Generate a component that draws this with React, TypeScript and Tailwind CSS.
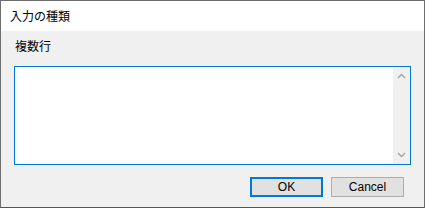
export default function App() {
  const font = { fontFamily: '"Noto Sans CJK JP", "Noto Sans", sans-serif' };
  return (
    <div
      className="w-[425px] h-[208px] flex flex-col border border-[#6e6e6e] border-b-[#4a5a55] bg-[#f0f0f0] text-[12px] text-black"
      style={font}
    >
      <div className="h-[30px] bg-white flex items-center pl-[9px] shrink-0">
        <span className="leading-none text-[12px]">入力の種類</span>
      </div>
      <div className="flex-1 flex flex-col px-[13px] pt-[8px]">
        <div className="h-[14px] leading-[14px] pl-[1px] text-[12px]">複数行</div>
        <div className="mt-[13px] h-[99px] border border-[#0078d7] bg-white flex justify-end">
          <div className="w-[17px] h-full bg-[#f0f0f0] flex flex-col items-center justify-between py-[6px]">
            <svg width="9" height="6" viewBox="0 0 9 6">
              <path d="M1 5 L4.5 1.5 L8 5" fill="none" stroke="#a3a3a3" strokeWidth="1.4" />
            </svg>
            <svg width="9" height="6" viewBox="0 0 9 6">
              <path d="M1 1 L4.5 4.5 L8 1" fill="none" stroke="#a3a3a3" strokeWidth="1.4" />
            </svg>
          </div>
        </div>
        <div
          className="flex justify-end gap-[8px] mt-[12px] pr-[7px]"
          style={{ fontFamily: '"Liberation Sans", Arial, sans-serif' }}
        >
          <button className="w-[73px] h-[20px] border-2 border-[#0078d7] bg-[#e1e1e1] flex items-center justify-center text-[12px] leading-none">
            OK
          </button>
          <button className="w-[73px] h-[20px] border border-[#adadad] bg-[#e1e1e1] flex items-center justify-center text-[12px] leading-none">
            Cancel
          </button>
        </div>
      </div>
    </div>
  );
}
